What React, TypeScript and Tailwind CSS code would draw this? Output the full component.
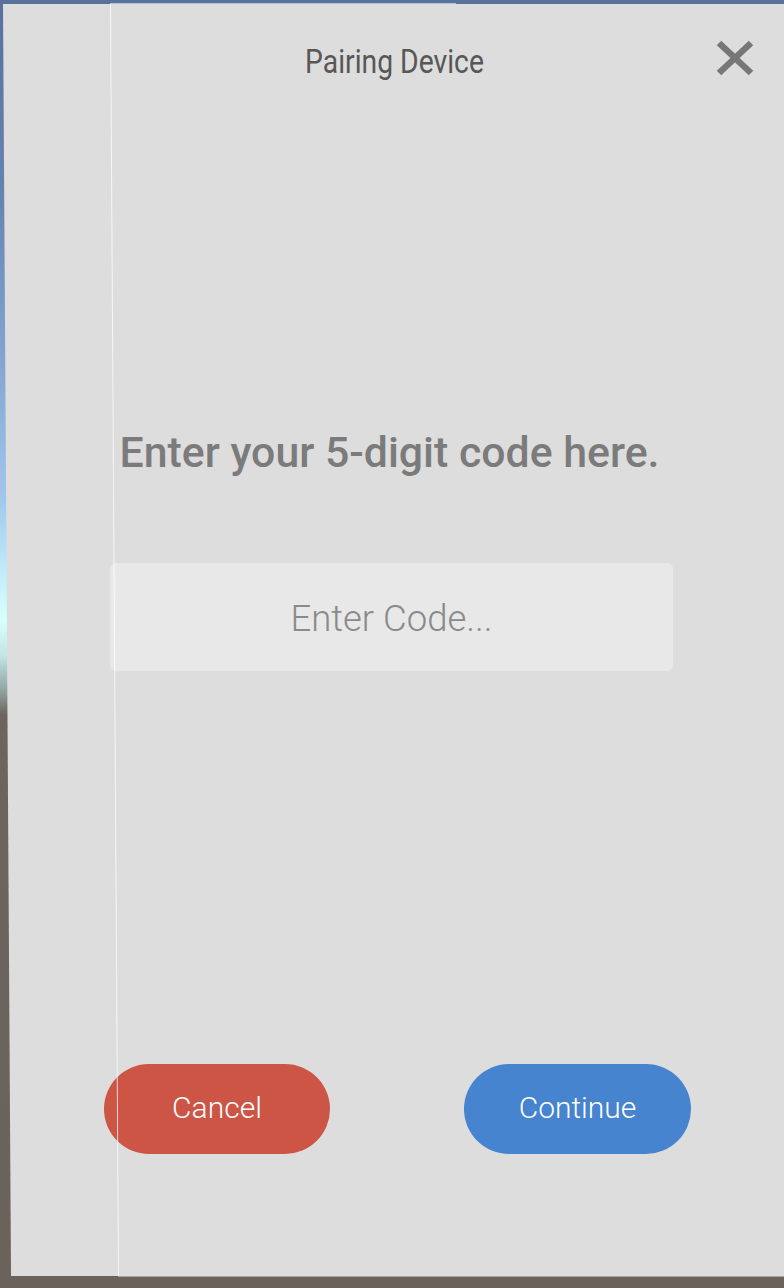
import React from "react";

export default function App() {
  const font = { fontFamily: "Roboto, 'Noto Sans', sans-serif" };
  return (
    <div
      className="relative w-[784px] h-[1288px] overflow-hidden bg-[linear-gradient(180deg,#58719d_0px,#6784b1_200px,#87a9d6_380px,#a2c7ee_500px,#c4f0fa_580px,#d8ffff_620px,#c2e6e6_655px,#93a3a3_690px,#6c645d_715px,#6b625b_1288px)]"
      style={font}
    >
      <div className="mt-[4px] h-[1272px] bg-[#dddddd] flex flex-col [clip-path:polygon(3px_0,100%_0,100%_100%,11px_100%)]">
        <div className="grid grid-cols-[1fr_auto_1fr] items-start pt-[41px] pl-[5px]">
          <div />
          <h1 className="text-[28.3px] leading-[36px] text-[#575757] scale-y-[1.16]">
            Pairing Device
          </h1>
          <div className="flex justify-end pr-[30px] -mt-[5px]">
            <button className="w-[38px] h-[36px] flex items-center justify-center">
              <svg width="38" height="36" viewBox="0 0 38 36">
                <line x1="3" y1="3" x2="35" y2="33" stroke="#777777" strokeWidth="6.5" />
                <line x1="35" y1="3" x2="3" y2="33" stroke="#777777" strokeWidth="6.5" />
              </svg>
            </button>
          </div>
        </div>

        <p className="mt-[345px] pl-[7px] pr-[12px] text-center text-[42.8px] leading-[52px] font-medium text-[#7b7b7b]">
          Enter your 5-digit code here.
        </p>

        <div className="mt-[85px] ml-[110px] w-[563px] h-[108px] rounded-[6px] bg-[#e8e8e8] flex items-center justify-center pt-[4px]">
          <span className="text-[36.5px] leading-[44px] font-light text-[#8a8a8a]">Enter Code...</span>
        </div>

        <div className="mt-[393px] ml-[104px] flex gap-[134px]">
          <button className="w-[226px] h-[90px] rounded-full bg-[#cc5546] text-white text-[30px] font-light flex items-center justify-center pb-[3px]">
            Cancel
          </button>
          <button className="w-[227px] h-[90px] rounded-full bg-[#4684d0] text-white text-[30px] font-light flex items-center justify-center pb-[3px]">
            Continue
          </button>
        </div>
      </div>

      <svg className="absolute inset-0 pointer-events-none" width="784" height="1288">
        <line x1="110.5" y1="4" x2="118.5" y2="1276" stroke="#ffffff" strokeOpacity="0.75" strokeWidth="1" />
        <line x1="110" y1="3.5" x2="456" y2="3.5" stroke="#b4c2d6" strokeWidth="1" />
        <line x1="118" y1="1276.5" x2="784" y2="1276.5" stroke="#a9a39e" strokeWidth="1" />
      </svg>
    </div>
  );
}
